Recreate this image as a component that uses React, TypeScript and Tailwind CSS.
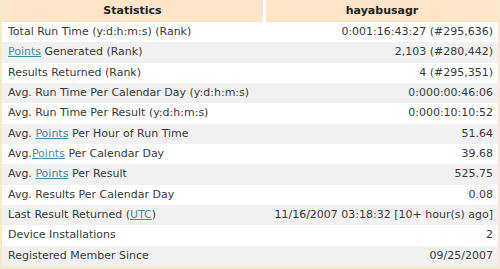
import React from 'react';

const rows: { label: React.ReactNode; value: string }[] = [
  { label: 'Total Run Time (y:d:h:m:s) (Rank)', value: '0:001:16:43:27 (#295,636)' },
  { label: <><A>Points</A> Generated (Rank)</>, value: '2,103 (#280,442)' },
  { label: 'Results Returned (Rank)', value: '4 (#295,351)' },
  { label: 'Avg. Run Time Per Calendar Day (y:d:h:m:s)', value: '0:000:00:46:06' },
  { label: 'Avg. Run Time Per Result (y:d:h:m:s)', value: '0:000:10:10:52' },
  { label: <>Avg. <A>Points</A> Per Hour of Run Time</>, value: '51.64' },
  { label: <>Avg.<A>Points</A> Per Calendar Day</>, value: '39.68' },
  { label: <>Avg. <A>Points</A> Per Result</>, value: '525.75' },
  { label: 'Avg. Results Per Calendar Day', value: '0.08' },
  { label: <>Last Result Returned (<A>UTC</A>)</>, value: '11/16/2007 03:18:32 [10+ hour(s) ago]' },
  { label: 'Device Installations', value: '2' },
  { label: 'Registered Member Since', value: '09/25/2007' },
];

function A({ children }: { children: React.ReactNode }) {
  return <a href="#" className="text-[#3f8f9e] underline">{children}</a>;
}

export default function App() {
  return (
    <div className="w-[500px] h-[269px] bg-white flex flex-col border-x-2 border-b-[3px] border-[#f5ebc6] font-['DejaVu_Sans',Verdana,sans-serif] text-[11px] text-[#3a3a3a]">
      <div className="h-[22px] flex gap-[3px] shrink-0">
        <div className="w-[261px] bg-[#fde5c9] flex items-center justify-center font-bold text-[#222]">Statistics</div>
        <div className="flex-1 bg-[#fde5c9] flex items-center justify-center font-bold text-[#222]">hayabusagr</div>
      </div>
      <div className="flex-1 flex flex-col">
        {rows.map((r, i) => (
          <div key={i} className={`flex-1 flex items-center ${i % 2 === 1 ? 'bg-[#f1f1f1]' : 'bg-white'}`}>
            <div className="w-[264px] pl-[6px] whitespace-nowrap">{r.label}</div>
            <div className="flex-1 text-right pr-[5px] whitespace-nowrap">{r.value}</div>
          </div>
        ))}
      </div>
    </div>
  );
}
